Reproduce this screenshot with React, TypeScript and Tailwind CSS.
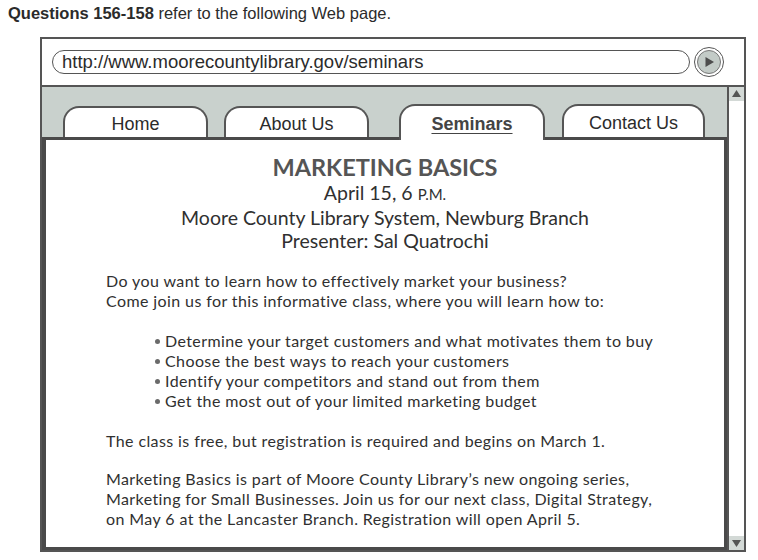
import React from 'react';

const tabs = [
  { label: 'Home', w: 'w-[145px]', h: 'h-[31px]', ml: 'ml-[21px]' },
  { label: 'About Us', w: 'w-[145px]', h: 'h-[31px]', ml: 'ml-[16px]' },
  { label: 'Seminars', w: 'w-[146px]', h: 'h-[36px]', ml: 'ml-[30px]', active: true },
  { label: 'Contact Us', w: 'w-[143px]', h: 'h-[33px]', ml: 'ml-[17px]' },
];

const bullets = [
  'Determine your target customers and what motivates them to buy',
  'Choose the best ways to reach your customers',
  'Identify your competitors and stand out from them',
  'Get the most out of your limited marketing budget',
];

const Arrow: React.FC<{ down?: boolean }> = ({ down }) => (
  <svg width="9" height="8" viewBox="0 0 9 8">
    {down ? <polygon points="0,1 9,1 4.5,8" fill="#555" /> : <polygon points="0,7 9,7 4.5,0" fill="#555" />}
  </svg>
);

export default function App() {
  return (
    <div className="w-[758px] h-[560px] bg-white overflow-hidden font-['Liberation_Sans',Arial,sans-serif]">
      <p className="h-[37px] pl-[8px] pt-[4px] text-[16.5px] leading-[19px] text-[#2b2b2b]">
        <span className="font-bold">Questions 156-158</span> refer to the following Web page.
      </p>

      <div className="ml-[40px] w-[706px] h-[515px] border-2 border-[#555] flex flex-col">
        {/* address bar */}
        <div className="h-[48px] shrink-0 border-b-2 border-[#555] flex items-center pl-[10px]">
          <div className="w-[638px] h-[24px] rounded-full border-[1.5px] border-[#555] flex items-center pl-[9px] text-[18.5px] text-[#2b2b2b]">
            http://www.moorecountylibrary.gov/seminars
          </div>
          <div className="ml-[4px] w-[30px] h-[30px] rounded-full border-[1.5px] border-[#555] flex items-center justify-center">
            <div className="w-[24px] h-[24px] rounded-full bg-[#c3cbc7] border border-[#777] flex items-center justify-center">
              <svg width="12" height="12" viewBox="0 0 12 12">
                <polygon points="2.5,1 11,6 2.5,11" fill="#4d4d4d" />
              </svg>
            </div>
          </div>
        </div>

        <div className="flex flex-1 min-h-0">
          <div className="flex-1 flex flex-col">
            {/* tab strip */}
            <div className="h-[50px] shrink-0 bg-[#c9d1cd] flex items-end">
              {tabs.map((t) => (
                <div
                  key={t.label}
                  className={`${t.w} ${t.h} ${t.ml} rounded-t-[16px] border-2 border-b-0 border-[#555] bg-white flex items-center justify-center text-[18px] ${
                    t.active
                      ? 'relative z-10 -mb-[3px] pt-[3px] font-bold underline underline-offset-[3px] text-[#444]'
                      : 'pt-[4px] text-[#2b2b2b]'
                  }`}
                >
                  {t.label}
                </div>
              ))}
            </div>

            {/* page content */}
            <div className="flex-1 border-[3px] border-l-[4px] border-[#4a4a4a] bg-white font-['Lato',sans-serif] text-[#303030]">
              <div className="pt-[13px] text-center">
                <h1 className="text-[23.5px] leading-[28px] font-bold text-[#555]">MARKETING BASICS</h1>
                <p className="text-[19.5px] leading-[24px]">
                  April 15, 6 <span className="text-[15px]">P.M.</span>
                </p>
                <p className="text-[19.5px] leading-[23px]">Moore County Library System, Newburg Branch</p>
                <p className="text-[19.5px] leading-[24px]">Presenter: Sal Quatrochi</p>
              </div>

              <div className="pl-[60px] text-[16px] leading-[20px] tracking-[0.4px]">
                <p className="mt-[18px]">
                  Do you want to learn how to effectively market your business?
                  <br />
                  Come join us for this informative class, where you will learn how to:
                </p>
                <ul className="mt-[20px] pl-[49px]">
                  {bullets.map((b) => (
                    <li key={b} className="flex items-center">
                      <span className="w-[5px] h-[5px] rounded-full bg-[#6a6a6a] mr-[5px] mt-[1px]" />
                      <span>{b}</span>
                    </li>
                  ))}
                </ul>
                <p className="mt-[20px]">The class is free, but registration is required and begins on March 1.</p>
                <p className="mt-[18px]">
                  Marketing Basics is part of Moore County Library’s new ongoing series,
                  <br />
                  Marketing for Small Businesses. Join us for our next class, Digital Strategy,
                  <br />
                  on May 6 at the Lancaster Branch. Registration will open April 5.
                </p>
              </div>
            </div>
          </div>

          {/* scrollbar */}
          <div className="w-[17px] shrink-0 border-l-2 border-[#555] flex flex-col justify-between">
            <div className="h-[14px] bg-[#d3d9d6] flex items-center justify-center">
              <Arrow />
            </div>
            <div className="h-[14px] bg-[#d3d9d6] flex items-center justify-center">
              <Arrow down />
            </div>
          </div>
        </div>
      </div>
    </div>
  );
}
